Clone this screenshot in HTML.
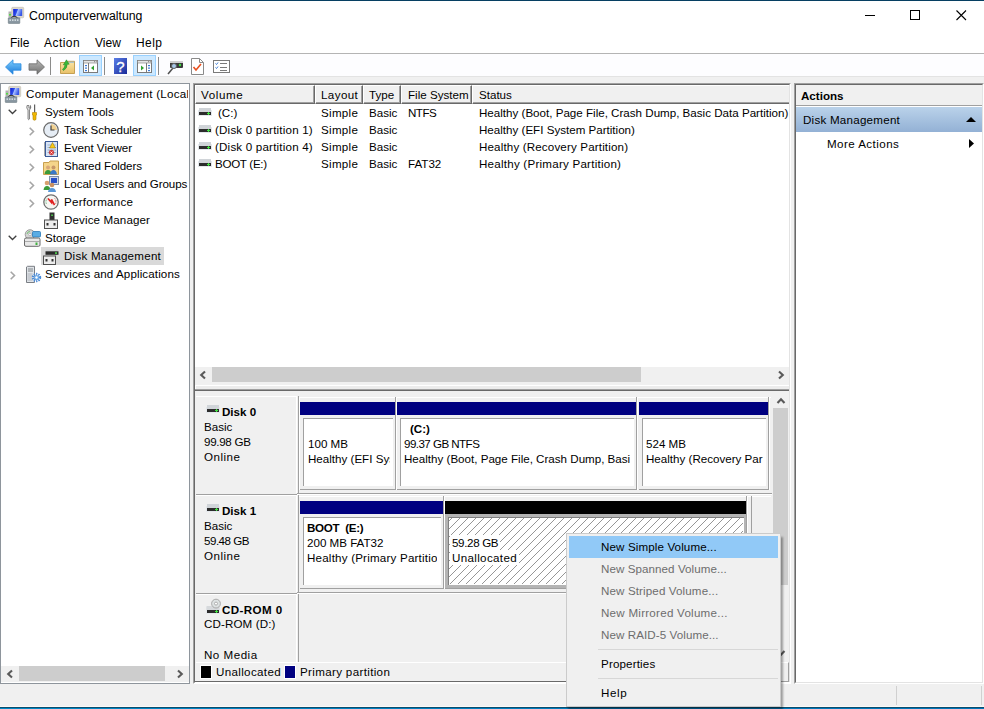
<!DOCTYPE html>
<html><head><meta charset="utf-8">
<style>
*{margin:0;padding:0;box-sizing:border-box}
html,body{width:984px;height:709px;overflow:hidden;background:#f0f0f0;font-family:"Liberation Sans",sans-serif;font-size:12px;color:#000}
.a{position:absolute}
.t{position:absolute;white-space:nowrap;line-height:14px;font-size:11.6px}
.b{font-weight:bold}
.g{color:#6d6d6d}
svg{position:absolute;overflow:visible}
.hd{position:absolute;top:85px;height:19px;background:#f0f0f0;border-top:1px solid #fff;border-left:1px solid #fff;border-right:1px solid #a0a0a0;border-bottom:1px solid #a0a0a0;box-shadow:1px 1px 0 #696969}
</style></head><body>
<!-- window frame -->
<div class="a" style="left:0;top:0;width:984px;height:1px;background:#063f62"></div>
<div class="a" style="left:0;top:1px;width:984px;height:52px;background:#fff"></div>
<div class="a" style="left:0;top:53px;width:984px;height:1px;background:#b4b4b4"></div>
<div class="a" style="left:0;top:54px;width:984px;height:22px;background:#fdfdff"></div>
<div class="a" style="left:0;top:76px;width:984px;height:1px;background:#e3e3e3"></div>
<div class="a" style="left:0;top:706px;width:984px;height:1px;background:#fbf9f7"></div><div class="a" style="left:0;top:707px;width:984px;height:1px;background:#0a4c6c"></div><div class="a" style="left:0;top:708px;width:984px;height:1px;background:linear-gradient(90deg,#0088c4,#0074b8)"></div>

<!-- title -->
<svg style="left:8px;top:7px" width="17" height="17" viewBox="0 0 17 17">
 <defs><linearGradient id="scr1" x1="0" y1="0" x2="1" y2="0.3"><stop offset="0" stop-color="#0818d8"/><stop offset="0.45" stop-color="#3050e8"/><stop offset="0.55" stop-color="#a8c0ff"/><stop offset="1" stop-color="#3858e8"/></linearGradient></defs>
 <rect x="3.7" y="0.3" width="12" height="10.5" rx="1" fill="#dcd8cc" stroke="#c0bcb0" stroke-width="0.6"/>
 <rect x="5.2" y="2" width="9" height="7" fill="url(#scr1)"/>
 <rect x="0.5" y="4.5" width="3" height="6" fill="#b0b0b0"/><rect x="1" y="7" width="2" height="1.5" fill="#50e040"/>
 <path d="M3 11Q6 7.5 9.5 11" fill="none" stroke="#303030" stroke-width="1.1"/>
 <rect x="0.3" y="10.8" width="11.5" height="5.6" rx="0.5" fill="#8a98a2" stroke="#6a7880" stroke-width="0.6"/>
 <path d="M1.5 13.2H10.5" stroke="#e8eef2" stroke-width="1.2" stroke-dasharray="1.5 1"/>
</svg>
<div class="t" style="left:29px;top:9px;font-size:12.3px">Computerverwaltung</div>
<!-- window controls -->
<div class="a" style="left:865px;top:15px;width:10px;height:1px;background:#000"></div>
<div class="a" style="left:910px;top:10px;width:10px;height:10px;border:1px solid #000"></div>
<svg style="left:956px;top:10px" width="10" height="10"><path d="M0.5 0.5L10 10M10 0.5L0.5 10" stroke="#000" stroke-width="1.1"/></svg>

<!-- menu -->
<div class="t" style="left:10px;top:36px;font-size:12px">File</div>
<div class="t" style="left:44px;top:36px;font-size:12px;letter-spacing:0.45px">Action</div>
<div class="t" style="left:95px;top:36px;font-size:12px">View</div>
<div class="t" style="left:136px;top:36px;font-size:12px;letter-spacing:0.45px">Help</div>

<!-- toolbar -->
<svg style="left:5px;top:59px" width="17" height="16" viewBox="0 0 17 16">
 <defs><linearGradient id="bl" x1="0" y1="0" x2="0" y2="1"><stop offset="0" stop-color="#7fd0ff"/><stop offset="1" stop-color="#1a78d8"/></linearGradient></defs>
 <path d="M0.5 8L8 0.8V4.8H16V11.2H8V15.2Z" fill="url(#bl)" stroke="#2a8ae0" stroke-width="0.8"/>
</svg>
<svg style="left:28px;top:59px" width="17" height="16" viewBox="0 0 17 16">
 <defs><linearGradient id="gr" x1="0" y1="0" x2="0" y2="1"><stop offset="0" stop-color="#b8b8b8"/><stop offset="1" stop-color="#707070"/></linearGradient></defs>
 <path d="M16.5 8L9 0.8V4.8H1V11.2H9V15.2Z" fill="url(#gr)" stroke="#6a6a6a" stroke-width="0.8"/>
</svg>
<div class="a" style="left:50px;top:57px;width:1px;height:18px;background:#8a8a8a"></div>
<svg style="left:60px;top:59px" width="15" height="15" viewBox="0 0 15 15">
 <defs><linearGradient id="fdg" x1="0" y1="0" x2="0" y2="1"><stop offset="0" stop-color="#fbe6a8"/><stop offset="1" stop-color="#e8c068"/></linearGradient></defs>
 <path d="M0.5 3.5H7L8 2.3H14.5V14.5H0.5Z" fill="url(#fdg)" stroke="#c09848" stroke-width="0.9"/>
 <path d="M8.5 3.2H14" stroke="#7ab0e0" stroke-width="0.9"/>
 <path d="M2.5 10.5Q5 8.5 5 5.5L3.3 5.8L6.5 0.8L9.2 5.2L7.2 5.3Q7.2 9.5 3.5 11.5Z" fill="#38b838" stroke="#208020" stroke-width="0.5"/>
</svg>
<div class="a" style="left:79px;top:55px;width:23px;height:21px;background:#cce8ff;border:1px solid #99d1ff"></div>
<svg style="left:83px;top:60px" width="15" height="13" viewBox="0 0 15 13">
 <rect x="0.5" y="0.5" width="14" height="12" fill="#fff" stroke="#7a7a7a"/>
 <rect x="0.5" y="0.5" width="14" height="2.5" fill="#e4e4e4" stroke="#7a7a7a" stroke-width="0.6"/><rect x="11" y="1.2" width="1" height="1" fill="#808080"/><rect x="12.8" y="1.2" width="1" height="1" fill="#808080"/>
 <rect x="2" y="5" width="2" height="1.2" fill="#3a7ad8"/><rect x="2" y="7.5" width="2" height="1.2" fill="#3a7ad8"/><rect x="2" y="10" width="2" height="1.2" fill="#3a7ad8"/>
 <path d="M5.5 3V12.5" stroke="#7a7a7a"/>
 <path d="M11 5.5L8 8L11 10.5Z" fill="#30a030"/>
</svg>
<div class="a" style="left:104px;top:57px;width:1px;height:18px;background:#8a8a8a"></div>
<svg style="left:114px;top:58px" width="14" height="17" viewBox="0 0 14 17">
 <defs><linearGradient id="hq" x1="0" y1="0" x2="1" y2="1"><stop offset="0" stop-color="#5a7ee8"/><stop offset="1" stop-color="#1a2a98"/></linearGradient></defs>
 <rect x="0" y="0" width="13" height="16" fill="url(#hq)"/>
 <text x="6.5" y="13.5" font-family="Liberation Sans" font-size="15" fill="#fff" stroke="#fff" stroke-width="0.3" text-anchor="middle">?</text>
</svg>
<div class="a" style="left:133px;top:55px;width:23px;height:21px;background:#cce8ff;border:1px solid #99d1ff"></div>
<svg style="left:137px;top:60px" width="15" height="13" viewBox="0 0 15 13">
 <rect x="0.5" y="0.5" width="14" height="12" fill="#fff" stroke="#7a7a7a"/>
 <rect x="0.5" y="0.5" width="14" height="2.5" fill="#e4e4e4" stroke="#7a7a7a" stroke-width="0.6"/><rect x="11" y="1.2" width="1" height="1" fill="#808080"/><rect x="12.8" y="1.2" width="1" height="1" fill="#808080"/>
 <rect x="11" y="5" width="2" height="1.2" fill="#3a7ad8"/><rect x="11" y="7.5" width="2" height="1.2" fill="#3a7ad8"/><rect x="11" y="10" width="2" height="1.2" fill="#3a7ad8"/>
 <path d="M9.5 3V12.5" stroke="#7a7a7a"/>
 <path d="M4 5.5L7 8L4 10.5Z" fill="#30a030"/>
</svg>
<div class="a" style="left:158px;top:57px;width:1px;height:18px;background:#8a8a8a"></div>
<svg style="left:167px;top:59px" width="16" height="16" viewBox="0 0 16 16">
 <rect x="3" y="3" width="13" height="6" fill="#3a3a3a" rx="1"/>
 <rect x="3" y="2" width="13" height="2" fill="#d0d0d0"/>
 <circle cx="13" cy="6" r="1.2" fill="#40e040"/>
 <path d="M1 15L6 9" stroke="#505050" stroke-width="1.5"/>
 <circle cx="7" cy="7" r="2.5" fill="#a8c8e8" stroke="#606060"/>
</svg>
<svg style="left:191px;top:58px" width="13" height="17" viewBox="0 0 13 17">
 <path d="M0.5 0.5H8.5L12.5 4.5V16.5H0.5Z" fill="#fff" stroke="#8a8a8a"/>
 <path d="M8.5 0.5V4.5H12.5" fill="none" stroke="#8a8a8a"/>
 <path d="M2.5 9L5 12L10 6" fill="none" stroke="#e85020" stroke-width="1.6"/>
</svg>
<svg style="left:213px;top:60px" width="17" height="13" viewBox="0 0 17 13">
 <rect x="0.5" y="0.5" width="16" height="12" fill="#fff" stroke="#7a7a7a"/>
 <path d="M2.5 3.5L3.5 4.5L5 2.5M2.5 7.5L3.5 8.5L5 6.5" fill="none" stroke="#3a7ad8" stroke-width="1"/>
 <path d="M7 3.5H14M7 7.5H14M7 10.5H14" stroke="#7a7a7a"/>
</svg>

<!-- ============ LEFT PANEL ============ -->
<div class="a" style="left:0;top:83px;width:190px;height:601px;background:#fff;border:1px solid #8e959c"></div>
<div class="a" style="left:41px;top:247px;width:123px;height:18px;background:#d9d9d9"></div>
<!-- tree texts -->
<div class="t" style="left:26px;top:87px;width:162px;overflow:hidden;letter-spacing:0.26px">Computer Management (Local</div>
<div class="t" style="left:45px;top:105px">System Tools</div>
<div class="t" style="left:64px;top:123px;letter-spacing:-0.1px">Task Scheduler</div>
<div class="t" style="left:64px;top:141px">Event Viewer</div>
<div class="t" style="left:64px;top:159px;letter-spacing:-0.1px">Shared Folders</div>
<div class="t" style="left:64px;top:177px;letter-spacing:-0.08px">Local Users and Groups</div>
<div class="t" style="left:64px;top:195px;letter-spacing:0.27px">Performance</div>
<div class="t" style="left:64px;top:213px;letter-spacing:0.12px">Device Manager</div>
<div class="t" style="left:45px;top:231px">Storage</div>
<div class="t" style="left:64px;top:249px;letter-spacing:0.24px">Disk Management</div>
<div class="t" style="left:45px;top:267px;letter-spacing:0.11px">Services and Applications</div>
<!-- chevrons -->
<svg style="left:8px;top:109px" width="9" height="6"><path d="M0.7 0.7L4.5 4.5L8.3 0.7" fill="none" stroke="#404040" stroke-width="1.3"/></svg>
<svg style="left:8px;top:235px" width="9" height="6"><path d="M0.7 0.7L4.5 4.5L8.3 0.7" fill="none" stroke="#404040" stroke-width="1.3"/></svg>
<svg style="left:29px;top:127px" width="6" height="9"><path d="M0.7 0.7L4.5 4.5L0.7 8.3" fill="none" stroke="#a6a6a6" stroke-width="1.6"/></svg>
<svg style="left:29px;top:145px" width="6" height="9"><path d="M0.7 0.7L4.5 4.5L0.7 8.3" fill="none" stroke="#a6a6a6" stroke-width="1.6"/></svg>
<svg style="left:29px;top:163px" width="6" height="9"><path d="M0.7 0.7L4.5 4.5L0.7 8.3" fill="none" stroke="#a6a6a6" stroke-width="1.6"/></svg>
<svg style="left:29px;top:181px" width="6" height="9"><path d="M0.7 0.7L4.5 4.5L0.7 8.3" fill="none" stroke="#a6a6a6" stroke-width="1.6"/></svg>
<svg style="left:29px;top:199px" width="6" height="9"><path d="M0.7 0.7L4.5 4.5L0.7 8.3" fill="none" stroke="#a6a6a6" stroke-width="1.6"/></svg>
<svg style="left:10px;top:271px" width="6" height="9"><path d="M0.7 0.7L4.5 4.5L0.7 8.3" fill="none" stroke="#a6a6a6" stroke-width="1.6"/></svg>
<!-- icons -->
<svg style="left:5px;top:86px" width="17" height="17" viewBox="0 0 17 17">
 <defs><linearGradient id="scr2" x1="0" y1="0" x2="1" y2="0.3"><stop offset="0" stop-color="#0818d8"/><stop offset="0.45" stop-color="#3050e8"/><stop offset="0.55" stop-color="#a8c0ff"/><stop offset="1" stop-color="#3858e8"/></linearGradient></defs>
 <rect x="3.7" y="0.3" width="12" height="10.5" rx="1" fill="#dcd8cc" stroke="#c0bcb0" stroke-width="0.6"/>
 <rect x="5.2" y="2" width="9" height="7" fill="url(#scr2)"/>
 <rect x="0.5" y="4.5" width="3" height="6" fill="#b0b0b0"/><rect x="1" y="7" width="2" height="1.5" fill="#50e040"/>
 <path d="M3 11Q6 7.5 9.5 11" fill="none" stroke="#303030" stroke-width="1.1"/>
 <rect x="0.3" y="10.8" width="11.5" height="5.6" rx="0.5" fill="#8a98a2" stroke="#6a7880" stroke-width="0.6"/>
 <path d="M1.5 13.2H10.5" stroke="#e8eef2" stroke-width="1.2" stroke-dasharray="1.5 1"/>
</svg>
<svg style="left:26px;top:104px" width="12" height="17" viewBox="0 0 12 17">
 <path d="M1 1.5Q0 4 2 6V15Q2.5 16.5 3.5 15V6Q5.5 4 4.5 1.5V4H3V1.5Z" fill="#e0e0e0" stroke="#707070" stroke-width="0.8"/>
 <rect x="8" y="0.5" width="1.2" height="8" fill="#606060"/>
 <path d="M6.5 8.5H10.5V11H10V15.5Q8.5 17 7 15.5V11H6.5Z" fill="#f0b800" stroke="#b08000" stroke-width="0.6"/>
</svg>
<svg style="left:43px;top:122px" width="16" height="16" viewBox="0 0 16 16">
 <circle cx="8" cy="8" r="7.3" fill="#e6edf5" stroke="#6a6a6a" stroke-width="1.2"/>
 <path d="M8 2A6 6 0 0 1 14 8H8Z" fill="#f0d090"/>
 <path d="M8 3.5V8H11.5" fill="none" stroke="#404040" stroke-width="1.2"/>
</svg>
<svg style="left:44px;top:141px" width="14" height="16" viewBox="0 0 14 16">
 <rect x="1.5" y="0.5" width="12" height="15" fill="#d8e4f4" stroke="#3a5a98"/>
 <path d="M3.5 4H12M3.5 6.5H12M3.5 9H12M3.5 11.5H12" stroke="#8aa4cc" stroke-width="0.8"/>
 <path d="M0.5 1.5V15" stroke="#505050" stroke-dasharray="1 1"/>
 <path d="M8.5 1.5L11.5 7H5.5Z" fill="#f8c818" stroke="#8a6a00" stroke-width="0.5"/>
 <circle cx="7.5" cy="11.5" r="2.4" fill="#e03838" stroke="#a02020" stroke-width="0.4"/>
 <path d="M6.5 10.5L8.5 12.5M8.5 10.5L6.5 12.5" stroke="#fff" stroke-width="0.7"/>
</svg>
<svg style="left:43px;top:159px" width="16" height="16" viewBox="0 0 16 16">
 <path d="M0.5 3.5H6L7 2H15.5V15.5H0.5Z" fill="#f5d58a" stroke="#c8a050"/>
 <circle cx="5" cy="8.5" r="2" fill="#d8a878"/><path d="M1.5 15Q2 11 5 11Q8 11 8.5 15Z" fill="#3a9a3a"/>
 <circle cx="10.5" cy="8.5" r="2" fill="#c89868"/><path d="M7 15.5Q7.5 11 10.5 11Q13.5 11 14 15.5Z" fill="#3a78c8"/>
</svg>
<svg style="left:43px;top:176px" width="16" height="16" viewBox="0 0 16 16">
 <rect x="6.5" y="0.5" width="9" height="8" fill="#d0d8e8" stroke="#8090a8"/>
 <rect x="8" y="2" width="6" height="5" fill="#2850c8"/>
 <circle cx="4" cy="7" r="2.3" fill="#d8a070"/><path d="M0.5 14Q1 10 4 10Q7 10 7.5 14Z" fill="#3a9a3a"/>
 <circle cx="9" cy="9" r="2.3" fill="#c89060"/><path d="M5 16Q5.5 12 9 12Q12.5 12 13 16Z" fill="#5a98d8"/>
</svg>
<svg style="left:43px;top:194px" width="16" height="16" viewBox="0 0 16 16">
 <circle cx="8" cy="8" r="7.2" fill="#f6f6f2" stroke="#707070" stroke-width="1.3"/>
 <path d="M3.5 10A5 5 0 0 1 4.2 4.5" fill="none" stroke="#40a060" stroke-width="0.9" stroke-dasharray="0.8 0.8"/>
 <path d="M11.8 4.5A5 5 0 0 1 12.5 10" fill="none" stroke="#d04040" stroke-width="0.9" stroke-dasharray="0.8 0.8"/>
 <path d="M5 4.5L8.5 8.5V5.5L11.5 11" fill="none" stroke="#e02020" stroke-width="1.6"/>
</svg>
<svg style="left:44px;top:212px" width="14" height="17" viewBox="0 0 14 17">
 <rect x="5.5" y="0.5" width="5" height="7.5" fill="#303030"/><rect x="7.3" y="2.5" width="1.5" height="1.5" fill="#50e050"/>
 <rect x="0.5" y="8" width="13" height="8.5" fill="#ececec" stroke="#505050"/>
 <rect x="2.5" y="11" width="2" height="2.5" fill="#303030"/><rect x="9.5" y="11" width="2" height="2.5" fill="#303030"/>
</svg>
<svg style="left:24px;top:229px" width="17" height="18" viewBox="0 0 17 18">
 <circle cx="6" cy="5.5" r="4.8" fill="#d4d4d4" stroke="#8a8a8a" stroke-width="0.8"/><circle cx="6" cy="5.5" r="1.3" fill="#fff" stroke="#8a8a8a" stroke-width="0.5"/>
 <path d="M3 5A3 3 0 0 1 6 2.5" stroke="#60c060" stroke-width="0.8" fill="none"/>
 <rect x="8.5" y="2.5" width="8" height="5.5" rx="1" fill="#5aace4" stroke="#2a78b8" stroke-width="0.8"/>
 <path d="M0.5 10.5Q0.5 9 2 9H14.5Q16 9 16 10.5V16Q16 17.3 14.5 17.3H2Q0.5 17.3 0.5 16Z" fill="#e8e8e8" stroke="#6a6a6a"/>
 <path d="M0.8 12.5H15.8" stroke="#9a9a9a" stroke-width="0.8"/>
 <rect x="11.5" y="13.5" width="2" height="2.5" fill="#40b040"/>
</svg>
<svg style="left:43px;top:249px" width="16" height="16" viewBox="0 0 16 16">
 <path d="M3 0.5H15L15.5 2.5H2.5Z" fill="#d0d2d4"/>
 <rect x="2.5" y="2.3" width="13" height="3.5" fill="#2a2a2a"/><rect x="12" y="3.3" width="2" height="1.5" fill="#50e050"/>
 <rect x="0.5" y="7" width="12" height="8.5" fill="#ececec" stroke="#505050"/>
 <rect x="2.5" y="10" width="2" height="2.5" fill="#303030"/><rect x="8.5" y="10" width="2" height="2.5" fill="#303030"/>
</svg>
<svg style="left:26px;top:266px" width="16" height="17" viewBox="0 0 16 17">
 <path d="M0.5 16.5V1L1.5 0.3H8.5V16.5Z" fill="#e0e4e8" stroke="#7a7e84"/>
 <path d="M2 3H7M2 5H7" stroke="#6a6e74" stroke-width="0.8"/>
 <rect x="1.5" y="7" width="5" height="8" fill="#c8ccd2"/>
 <circle cx="10.5" cy="11.5" r="3.6" fill="none" stroke="#4a8ad8" stroke-width="2.2" stroke-dasharray="1.3 1"/>
 <circle cx="10.5" cy="11.5" r="2.6" fill="#6aa8e8"/>
 <circle cx="10.5" cy="11.5" r="1.2" fill="#fff"/>
</svg>

<!-- left h scrollbar -->
<div class="a" style="left:1px;top:666px;width:188px;height:16px;background:#f0f0f0"></div>
<div class="a" style="left:19px;top:666px;width:146px;height:15px;background:#cdcdcd"></div>
<svg style="left:7px;top:670px" width="6" height="8"><path d="M5 0.5L1.2 4L5 7.5" fill="none" stroke="#5a5a5a" stroke-width="2.1"/></svg>
<svg style="left:177px;top:670px" width="6" height="8"><path d="M1 0.5L4.8 4L1 7.5" fill="none" stroke="#5a5a5a" stroke-width="2.1"/></svg>

<!-- ============ MIDDLE PANEL ============ -->
<div class="a" style="left:193px;top:83px;width:598px;height:601px;background:#fff;border-top:1px solid #a0a0a0;border-left:1px solid #a0a0a0;border-right:1px solid #fff;border-bottom:1px solid #fff"></div>
<div class="a" style="left:194px;top:84px;width:596px;height:599px;border-top:1px solid #696969;border-left:1px solid #696969;border-right:1px solid #e3e3e3;border-bottom:1px solid #e3e3e3"></div>
<div class="a" style="left:195px;top:85px;width:120px;height:19px;background:#f0f0f0;border-top:1px solid #fff;border-left:1px solid #fff;border-right:1px solid #696969;border-bottom:1px solid #696969;box-shadow:inset -1px -1px 0 #a0a0a0"></div>
<div class="t " style="left:201px;top:88px;letter-spacing:0.6px">Volume</div>
<div class="a" style="left:315px;top:85px;width:48px;height:19px;background:#f0f0f0;border-top:1px solid #fff;border-left:1px solid #fff;border-right:1px solid #696969;border-bottom:1px solid #696969;box-shadow:inset -1px -1px 0 #a0a0a0"></div>
<div class="t " style="left:321px;top:88px;letter-spacing:0.4px">Layout</div>
<div class="a" style="left:363px;top:85px;width:38px;height:19px;background:#f0f0f0;border-top:1px solid #fff;border-left:1px solid #fff;border-right:1px solid #696969;border-bottom:1px solid #696969;box-shadow:inset -1px -1px 0 #a0a0a0"></div>
<div class="t " style="left:369px;top:88px;">Type</div>
<div class="a" style="left:401px;top:85px;width:71px;height:19px;background:#f0f0f0;border-top:1px solid #fff;border-left:1px solid #fff;border-right:1px solid #696969;border-bottom:1px solid #696969;box-shadow:inset -1px -1px 0 #a0a0a0"></div>
<div class="t " style="left:408px;top:88px;">File System</div>
<div class="a" style="left:472px;top:85px;width:317px;height:19px;background:#f0f0f0;border-top:1px solid #fff;border-left:1px solid #fff;border-bottom:1px solid #696969;box-shadow:inset 0 -1px 0 #a0a0a0"></div>
<div class="t " style="left:479px;top:88px;">Status</div>
<svg style="left:198px;top:108px" width="14" height="8" viewBox="0 0 14 8"><rect x="0" y="2" width="14" height="6" fill="#e4e8ec"/><rect x="1" y="0" width="12" height="4" fill="#d0d4d8"/><rect x="1" y="4" width="12" height="3" fill="#2c2c2c"/><rect x="9" y="5" width="3" height="1" fill="#40e040"/><rect x="10" y="4" width="1" height="3" fill="#40e040"/></svg>
<div class="t " style="left:218px;top:106px;">(C:)</div>
<div class="t " style="left:321px;top:106px;letter-spacing:0.3px">Simple</div>
<div class="t " style="left:369px;top:106px;">Basic</div>
<div class="t " style="left:408px;top:106px;letter-spacing:-0.5px">NTFS</div>
<div class="t " style="left:479px;top:106px;">Healthy (Boot, Page File, Crash Dump, Basic Data Partition)</div>
<svg style="left:198px;top:125px" width="14" height="8" viewBox="0 0 14 8"><rect x="0" y="2" width="14" height="6" fill="#e4e8ec"/><rect x="1" y="0" width="12" height="4" fill="#d0d4d8"/><rect x="1" y="4" width="12" height="3" fill="#2c2c2c"/><rect x="9" y="5" width="3" height="1" fill="#40e040"/><rect x="10" y="4" width="1" height="3" fill="#40e040"/></svg>
<div class="t " style="left:215px;top:123px;letter-spacing:0.19px">(Disk 0 partition 1)</div>
<div class="t " style="left:321px;top:123px;letter-spacing:0.3px">Simple</div>
<div class="t " style="left:369px;top:123px;">Basic</div>
<div class="t " style="left:479px;top:123px;">Healthy (EFI System Partition)</div>
<svg style="left:198px;top:142px" width="14" height="8" viewBox="0 0 14 8"><rect x="0" y="2" width="14" height="6" fill="#e4e8ec"/><rect x="1" y="0" width="12" height="4" fill="#d0d4d8"/><rect x="1" y="4" width="12" height="3" fill="#2c2c2c"/><rect x="9" y="5" width="3" height="1" fill="#40e040"/><rect x="10" y="4" width="1" height="3" fill="#40e040"/></svg>
<div class="t " style="left:215px;top:140px;letter-spacing:0.19px">(Disk 0 partition 4)</div>
<div class="t " style="left:321px;top:140px;letter-spacing:0.3px">Simple</div>
<div class="t " style="left:369px;top:140px;">Basic</div>
<div class="t " style="left:479px;top:140px;letter-spacing:0.15px">Healthy (Recovery Partition)</div>
<svg style="left:198px;top:159px" width="14" height="8" viewBox="0 0 14 8"><rect x="0" y="2" width="14" height="6" fill="#e4e8ec"/><rect x="1" y="0" width="12" height="4" fill="#d0d4d8"/><rect x="1" y="4" width="12" height="3" fill="#2c2c2c"/><rect x="9" y="5" width="3" height="1" fill="#40e040"/><rect x="10" y="4" width="1" height="3" fill="#40e040"/></svg>
<div class="t " style="left:215px;top:157px;letter-spacing:-0.3px">BOOT (E:)</div>
<div class="t " style="left:321px;top:157px;letter-spacing:0.3px">Simple</div>
<div class="t " style="left:369px;top:157px;">Basic</div>
<div class="t " style="left:408px;top:157px;">FAT32</div>
<div class="t " style="left:479px;top:157px;letter-spacing:0.23px">Healthy (Primary Partition)</div>
<div class="a" style="left:195px;top:367px;width:594px;height:18px;background:#f0f0f0;"></div>
<div class="a" style="left:212px;top:367px;width:429px;height:15px;background:#cdcdcd;"></div>
<svg style="left:200px;top:371px" width="6" height="8"><path d="M5 0.5L1.2 4L5 7.5" fill="none" stroke="#5a5a5a" stroke-width="2.1"/></svg>
<svg style="left:778px;top:371px" width="6" height="8"><path d="M1 0.5L4.8 4L1 7.5" fill="none" stroke="#5a5a5a" stroke-width="2.1"/></svg>
<div class="a" style="left:195px;top:385px;width:594px;height:1px;background:#fff;"></div>
<div class="a" style="left:195px;top:386px;width:594px;height:3px;background:#ececec;"></div>
<div class="a" style="left:195px;top:386px;width:1px;height:3px;background:#fff;"></div>
<div class="a" style="left:195px;top:389px;width:594px;height:1px;background:#a0a0a0;"></div>
<div class="a" style="left:195px;top:390px;width:594px;height:1px;background:#696969;"></div>
<div class="a" style="left:195px;top:391px;width:594px;height:290px;background:#f0f0f0;"></div>
<div class="a" style="left:195px;top:681px;width:594px;height:1px;background:#696969;"></div>
<div class="a" style="left:195px;top:682px;width:595px;height:1px;background:#fff;"></div>
<div class="a" style="left:772px;top:391px;width:17px;height:272px;background:#f0f0f0;"></div>
<div class="a" style="left:773px;top:408px;width:15px;height:177px;background:#cdcdcd;"></div>
<svg style="left:777px;top:398px" width="8" height="6"><path d="M0.5 5L4 1.2L7.5 5" fill="none" stroke="#5a5a5a" stroke-width="2.1"/></svg>
<svg style="left:777px;top:650px" width="8" height="6"><path d="M0.5 1L4 4.8L7.5 1" fill="none" stroke="#5a5a5a" stroke-width="2.1"/></svg>
<div class="a" style="left:196px;top:396px;width:100px;height:1px;background:#fff;"></div>
<div class="a" style="left:296px;top:396px;width:1px;height:97px;background:#fff;"></div>
<div class="a" style="left:298px;top:396px;width:1px;height:97px;background:#a0a0a0;"></div>
<div class="a" style="left:299px;top:397px;width:472px;height:1px;background:#fff;"></div>
<div class="a" style="left:299px;top:397px;width:1px;height:93px;background:#fff;"></div>
<div class="a" style="left:297px;top:493px;width:475px;height:1px;background:#a0a0a0;"></div>
<div class="a" style="left:297px;top:494px;width:475px;height:1px;background:#fff;"></div>
<div class="a" style="left:196px;top:494px;width:101px;height:1px;background:#a0a0a0;"></div>
<div class="a" style="left:196px;top:495px;width:101px;height:1px;background:#fff;"></div>
<div class="a" style="left:300px;top:402px;width:95px;height:13px;background:#000080;"></div>
<div class="a" style="left:300px;top:415px;width:95px;height:74px;background:#f0f0f0;"></div>
<div class="a" style="left:303px;top:418px;width:90px;height:68px;background:#fff;border-left:1px solid #a0a0a0;border-top:1px solid #a0a0a0"></div>
<div class="a" style="left:395px;top:397px;width:1px;height:93px;background:#a0a0a0;"></div>
<div class="a" style="left:396px;top:397px;width:1px;height:93px;background:#fff;"></div>
<div class="a" style="left:300px;top:489px;width:96px;height:1px;background:#a0a0a0;"></div>
<div class="a" style="left:397px;top:402px;width:239px;height:13px;background:#000080;"></div>
<div class="a" style="left:397px;top:415px;width:239px;height:74px;background:#f0f0f0;"></div>
<div class="a" style="left:400px;top:418px;width:234px;height:68px;background:#fff;border-left:1px solid #a0a0a0;border-top:1px solid #a0a0a0"></div>
<div class="a" style="left:636px;top:397px;width:1px;height:93px;background:#a0a0a0;"></div>
<div class="a" style="left:637px;top:397px;width:1px;height:93px;background:#fff;"></div>
<div class="a" style="left:397px;top:489px;width:240px;height:1px;background:#a0a0a0;"></div>
<div class="a" style="left:639px;top:402px;width:129px;height:13px;background:#000080;"></div>
<div class="a" style="left:639px;top:415px;width:129px;height:74px;background:#f0f0f0;"></div>
<div class="a" style="left:642px;top:418px;width:124px;height:68px;background:#fff;border-left:1px solid #a0a0a0;border-top:1px solid #a0a0a0"></div>
<div class="a" style="left:768px;top:397px;width:1px;height:93px;background:#a0a0a0;"></div>
<div class="a" style="left:769px;top:397px;width:1px;height:93px;background:#fff;"></div>
<div class="a" style="left:639px;top:489px;width:130px;height:1px;background:#a0a0a0;"></div>
<svg style="left:206px;top:405px" width="14" height="8" viewBox="0 0 14 8"><rect x="0" y="2" width="14" height="6" fill="#e4e8ec"/><rect x="1" y="0" width="12" height="4" fill="#d0d4d8"/><rect x="1" y="4" width="12" height="3" fill="#2c2c2c"/><rect x="9" y="5" width="3" height="1" fill="#40e040"/><rect x="10" y="4" width="1" height="3" fill="#40e040"/></svg>
<div class="t b" style="left:222px;top:405px;">Disk 0</div>
<div class="t " style="left:204px;top:420px;">Basic</div>
<div class="t " style="left:204px;top:435px;letter-spacing:-0.3px">99.98 GB</div>
<div class="t " style="left:204px;top:450px;letter-spacing:0.5px">Online</div>
<div class="t " style="left:308px;top:437px;">100 MB</div>
<div class="t " style="left:308px;top:452px;width:82px;overflow:hidden">Healthy (EFI Sys</div>
<div class="t b" style="left:410px;top:422px;">(C:)</div>
<div class="t " style="left:404px;top:437px;letter-spacing:-0.55px">99.37 GB NTFS</div>
<div class="t " style="left:404px;top:452px;width:226px;overflow:hidden">Healthy (Boot, Page File, Crash Dump, Basi</div>
<div class="t " style="left:646px;top:437px;">524 MB</div>
<div class="t " style="left:646px;top:452px;width:118px;overflow:hidden">Healthy (Recovery Par</div>
<div class="a" style="left:196px;top:495px;width:100px;height:1px;background:#fff;"></div>
<div class="a" style="left:296px;top:495px;width:1px;height:97px;background:#fff;"></div>
<div class="a" style="left:298px;top:495px;width:1px;height:97px;background:#a0a0a0;"></div>
<div class="a" style="left:299px;top:496px;width:472px;height:1px;background:#fff;"></div>
<div class="a" style="left:297px;top:592px;width:475px;height:1px;background:#a0a0a0;"></div>
<div class="a" style="left:297px;top:593px;width:475px;height:1px;background:#fff;"></div>
<div class="a" style="left:196px;top:593px;width:101px;height:1px;background:#a0a0a0;"></div>
<div class="a" style="left:196px;top:594px;width:101px;height:1px;background:#fff;"></div>
<div class="a" style="left:300px;top:501px;width:143px;height:13px;background:#000080;"></div>
<div class="a" style="left:300px;top:514px;width:143px;height:74px;background:#f0f0f0;"></div>
<div class="a" style="left:303px;top:517px;width:138px;height:68px;background:#fff;border-left:1px solid #a0a0a0;border-top:1px solid #a0a0a0"></div>
<div class="a" style="left:443px;top:496px;width:1px;height:93px;background:#a0a0a0;"></div>
<div class="a" style="left:444px;top:496px;width:1px;height:93px;background:#fff;"></div>
<div class="a" style="left:300px;top:588px;width:144px;height:1px;background:#a0a0a0;"></div>
<div class="a" style="left:445px;top:501px;width:301px;height:13px;background:#000;"></div>
<div class="a" style="left:445px;top:514px;width:301px;height:74px;background:#b4b4b4;"></div>
<div class="a" style="left:448px;top:517px;width:296px;height:68px;background:#fff;border-left:1px solid #808080;border-top:1px solid #808080"></div>
<div class="a" style="left:746px;top:496px;width:1px;height:93px;background:#a0a0a0;"></div>
<div class="a" style="left:747px;top:496px;width:1px;height:93px;background:#fff;"></div>
<div class="a" style="left:445px;top:588px;width:302px;height:1px;background:#a0a0a0;"></div>
<div class="a" style="left:751px;top:496px;width:1px;height:93px;background:#a0a0a0;"></div>
<svg style="left:206px;top:504px" width="14" height="8" viewBox="0 0 14 8"><rect x="0" y="2" width="14" height="6" fill="#e4e8ec"/><rect x="1" y="0" width="12" height="4" fill="#d0d4d8"/><rect x="1" y="4" width="12" height="3" fill="#2c2c2c"/><rect x="9" y="5" width="3" height="1" fill="#40e040"/><rect x="10" y="4" width="1" height="3" fill="#40e040"/></svg>
<div class="t b" style="left:222px;top:504px;">Disk 1</div>
<div class="t " style="left:204px;top:519px;">Basic</div>
<div class="t " style="left:204px;top:534px;letter-spacing:-0.5px">59.48 GB</div>
<div class="t " style="left:204px;top:549px;letter-spacing:0.5px">Online</div>
<div class="t b" style="left:307px;top:521px;letter-spacing:-0.28px">BOOT&nbsp; (E:)</div>
<div class="t " style="left:307px;top:536px;">200 MB FAT32</div>
<div class="t " style="left:307px;top:551px;width:130px;overflow:hidden;letter-spacing:0.2px">Healthy (Primary Partitio</div>
<svg style="left:449px;top:518px" width="294" height="66"><defs><pattern id="hp" x="3" width="8" height="8" patternUnits="userSpaceOnUse"><g fill="#969696"><rect x="7" y="0" width="1" height="1"/><rect x="6" y="1" width="1" height="1"/><rect x="5" y="2" width="1" height="1"/><rect x="4" y="3" width="1" height="1"/><rect x="3" y="4" width="1" height="1"/><rect x="2" y="5" width="1" height="1"/><rect x="1" y="6" width="1" height="1"/><rect x="0" y="7" width="1" height="1"/></g></pattern></defs><rect width="294" height="66" fill="url(#hp)"/></svg>
<div class="t " style="left:450px;top:535px;background:#fff;line-height:15px;padding:0 2px;letter-spacing:-0.35px">59.28 GB</div>
<div class="t " style="left:450px;top:550px;background:#fff;line-height:15px;padding:0 2px;letter-spacing:0.34px">Unallocated</div>
<div class="a" style="left:196px;top:594px;width:100px;height:1px;background:#fff;"></div>
<div class="a" style="left:296px;top:594px;width:1px;height:69px;background:#fff;"></div>
<div class="a" style="left:298px;top:594px;width:1px;height:69px;background:#a0a0a0;"></div>
<svg style="left:206px;top:599px" width="15" height="15" viewBox="0 0 15 15"><rect x="0" y="8" width="14" height="7" fill="#e6e9ec"/><rect x="0.5" y="7" width="13" height="4" fill="#d6d9dc"/><circle cx="10" cy="4.6" r="4.4" fill="#dde2e2" stroke="#a4a4a4" stroke-width="0.9"/><circle cx="10" cy="4.6" r="1.5" fill="#fff" stroke="#a0a0a0" stroke-width="0.8"/><rect x="1" y="11" width="12" height="3" fill="#2c2c2c"/><rect x="9" y="12" width="3" height="1" fill="#40e040"/><rect x="10" y="11" width="1" height="3" fill="#40e040"/></svg>
<div class="t b" style="left:222px;top:603px;letter-spacing:0.4px">CD-ROM 0</div>
<div class="t " style="left:204px;top:617px;letter-spacing:0.12px">CD-ROM (D:)</div>
<div class="t " style="left:204px;top:648px;letter-spacing:0.5px">No Media</div>
<div class="a" style="left:196px;top:662px;width:576px;height:1px;background:#fff;"></div>
<div class="a" style="left:200px;top:665px;width:12px;height:14px;background:#000;border:1px solid #fff"></div>
<div class="t " style="left:216px;top:665px;letter-spacing:0.34px">Unallocated</div>
<div class="a" style="left:284px;top:665px;width:12px;height:14px;background:#000080;border:1px solid #fff"></div>
<div class="t " style="left:300px;top:665px;letter-spacing:0.34px">Primary partition</div>
<div class="a" style="left:776px;top:662px;width:13px;height:20px;background:#f0f0f0;border-top:1px solid #fff;border-left:1px solid #fff;border-right:1px solid #a0a0a0;border-bottom:1px solid #a0a0a0"></div>

<!-- ============ RIGHT PANEL ============ -->
<div class="a" style="left:794px;top:83px;width:190px;height:601px;background:#fff;border-top:1px solid #a0a0a0;border-left:1px solid #a0a0a0;border-right:1px solid #fff;border-bottom:1px solid #fff"></div>
<div class="a" style="left:795px;top:84px;width:188px;height:599px;border-top:1px solid #696969;border-left:1px solid #696969;border-right:1px solid #e3e3e3;border-bottom:1px solid #e3e3e3"></div>
<div class="a" style="left:796px;top:85px;width:186px;height:21px;background:#f0f0f0;border-bottom:1px solid #a0a0a0"></div>
<div class="t b" style="left:801px;top:89px">Actions</div>
<div class="a" style="left:796px;top:107px;width:186px;height:25px;background:linear-gradient(#bad2ea,#93b1d5)"></div>
<div class="t" style="left:803px;top:113px;letter-spacing:0.24px">Disk Management</div>
<svg style="left:966px;top:117px" width="10" height="5"><path d="M0 5L5 0L10 5Z" fill="#000"/></svg>
<div class="t" style="left:827px;top:137px;letter-spacing:0.44px">More Actions</div>
<svg style="left:969px;top:139px" width="5" height="9"><path d="M0 0L5 4.5L0 9Z" fill="#000"/></svg>

<!-- status bar -->
<div class="a" style="left:896px;top:686px;width:1px;height:19px;background:#d0d0d0"></div>
<div class="a" style="left:981px;top:686px;width:1px;height:19px;background:#d0d0d0"></div>

<!-- context menu -->
<div class="a" style="left:566px;top:533px;width:215px;height:174px;background:#f0f0f0;border:1px solid #cbcbcb;box-shadow:2px 4px 2px rgba(0,0,0,0.35)"></div>
<div class="a" style="left:569px;top:536px;width:209px;height:22px;background:#91c9f7"></div>
<div class="t" style="left:601px;top:540px;letter-spacing:0.12px">New Simple Volume...</div>
<div class="t g" style="left:601px;top:562px;letter-spacing:0.07px">New Spanned Volume...</div>
<div class="t g" style="left:601px;top:584px;letter-spacing:0.12px">New Striped Volume...</div>
<div class="t g" style="left:601px;top:606px;letter-spacing:0.25px">New Mirrored Volume...</div>
<div class="t g" style="left:601px;top:628px;letter-spacing:0.08px">New RAID-5 Volume...</div>
<div class="a" style="left:598px;top:649px;width:180px;height:1px;background:#d7d7d7"></div>
<div class="t" style="left:601px;top:657px;letter-spacing:0.15px">Properties</div>
<div class="a" style="left:598px;top:678px;width:180px;height:1px;background:#d7d7d7"></div>
<div class="t" style="left:601px;top:686px;letter-spacing:0.6px">Help</div>

</body></html>
